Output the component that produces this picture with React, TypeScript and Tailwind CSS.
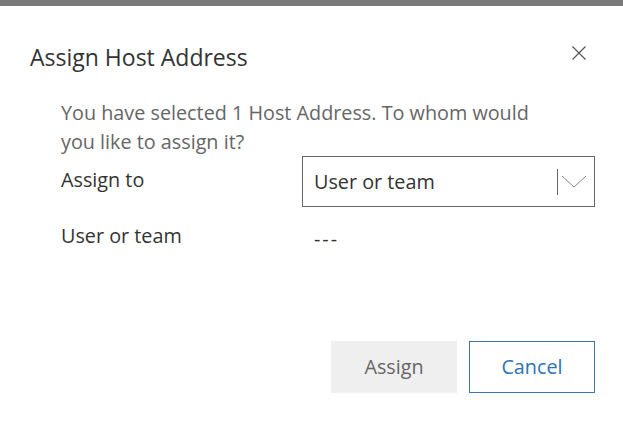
import React from "react";

const font = { fontFamily: '"Open Sans", "Noto Sans", sans-serif' };

const App = () => {
  return (
    <div className="w-[623px] h-[422px] bg-white flex flex-col" style={font}>
      <div className="h-[6px] bg-[#7a7a7a]" />
      <div className="flex items-start justify-between pl-[30px] pr-[36px] pt-[34px]">
        <h1 className="text-[23px] leading-[34px] text-[#333333]">Assign Host Address</h1>
        <button className="w-[16px] h-[16px] mt-[5px] flex items-center justify-center text-[#555555]">
          <svg width="16" height="16" viewBox="0 0 16 16" fill="none" stroke="currentColor" strokeWidth="1.2">
            <path d="M1.5 1.5 L14.5 14.5 M14.5 1.5 L1.5 14.5" />
          </svg>
        </button>
      </div>
      <div className="pl-[61px] pr-[28px] pt-[24px] flex flex-col">
        <p className="text-[19.8px] leading-[29px] text-[#666666] w-[475px]">
          You have selected 1 Host Address. To whom would you like to assign it?
        </p>
        <div className="flex items-start">
          <div className="w-[241px] text-[19.8px] leading-[28px] text-[#333333] pt-[10px]">Assign to</div>
          <div className="flex-1 h-[51px] border border-[#666666] flex items-center pl-[11px] pr-[4px]">
            <span className="flex-1 text-[19.8px] text-[#333333]">User or team</span>
            <span className="w-px h-[26px] bg-[#666666]" />
            <span className="w-[32px] flex items-center justify-center">
              <svg width="26" height="14" viewBox="0 0 26 14" fill="none" stroke="#888888" strokeWidth="1">
                <path d="M1 1 L13 12 L25 1" />
              </svg>
            </span>
          </div>
        </div>
        <div className="flex items-start mt-[15px]">
          <div className="w-[241px] text-[19.8px] leading-[28px] text-[#333333]">User or team</div>
          <div className="pl-[12px] text-[19.8px] leading-[28px] text-[#333333] pt-[3px] tracking-[2px]">---</div>
        </div>
      </div>
      <div className="flex-1" />
      <div className="flex justify-end gap-[12px] pr-[28px] pb-[29px]">
        <button className="w-[126px] h-[52px] bg-[#efefef] text-[19.8px] text-[#666666]">Assign</button>
        <button className="w-[126px] h-[52px] border border-[#3a73b8] text-[19.8px] text-[#2e72b8] bg-white">Cancel</button>
      </div>
    </div>
  );
};

export default App;
